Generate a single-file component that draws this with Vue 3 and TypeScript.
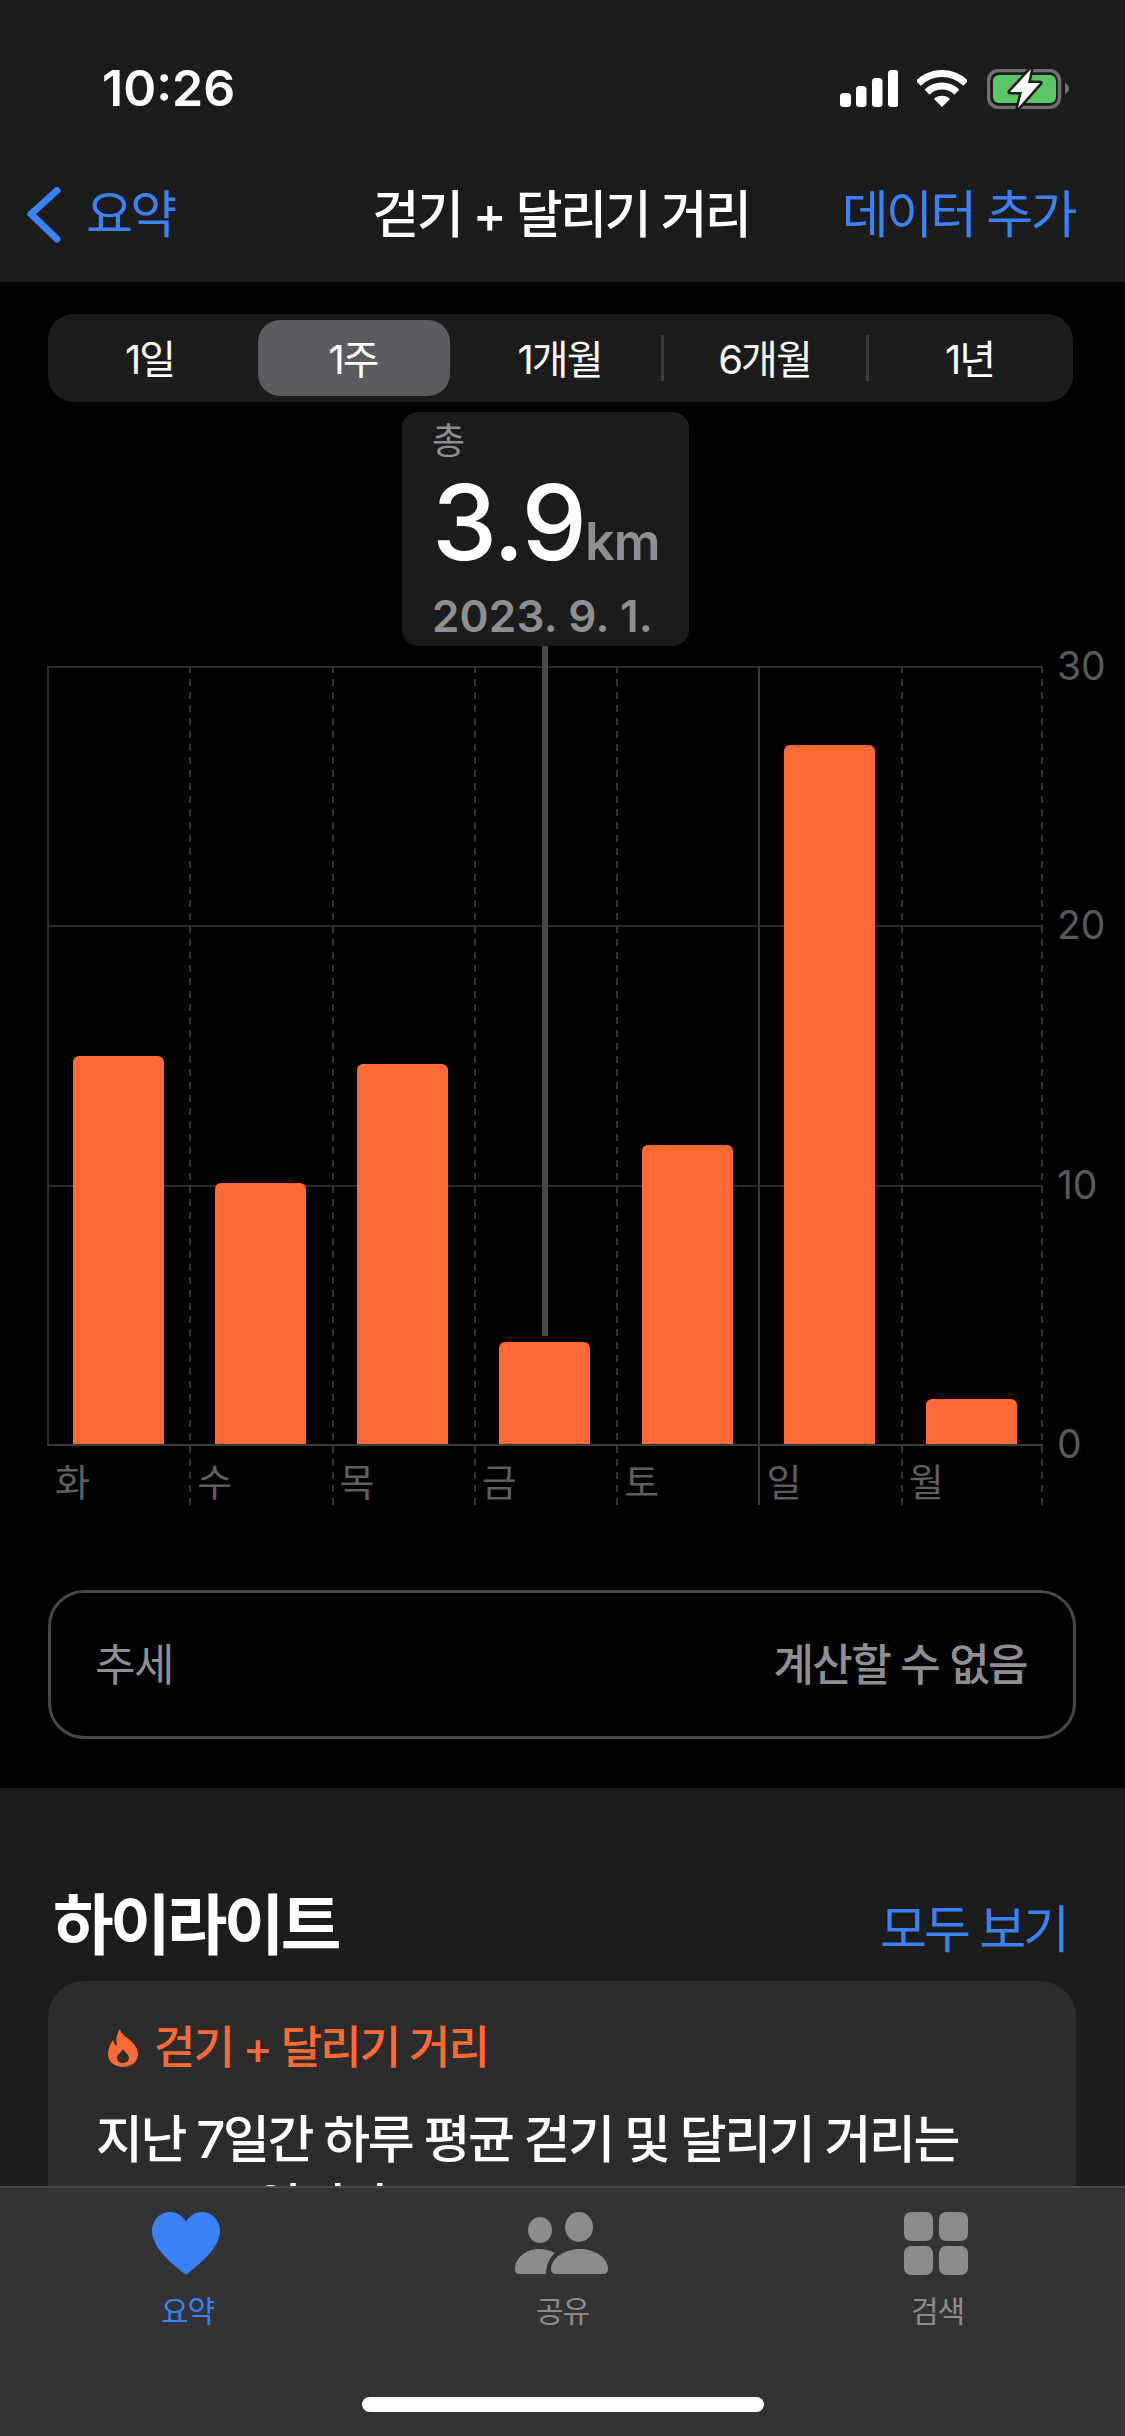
<script setup lang="ts">
interface Day { label: string; km: number; line: 'dash' | 'solid' | 'first' }

const ranges = ['1일', '1주', '1개월', '6개월', '1년']
const activeRange = 1

const PX_PER_KM = 25.93
const days: Day[] = [
  { label: '화', km: 14.95, line: 'first' },
  { label: '수', km: 10.05, line: 'dash' },
  { label: '목', km: 14.65, line: 'dash' },
  { label: '금', km: 3.95, line: 'dash' },
  { label: '토', km: 11.55, line: 'dash' },
  { label: '일', km: 26.95, line: 'solid' },
  { label: '월', km: 1.75, line: 'dash' },
]
const ticks = [30, 20, 10, 0]
</script>

<template>
  <div class="screen">
    <header class="top">
      <div class="status">
        <span class="status__time">10:26</span>
        <div class="status__icons">
          <svg width="58" height="37" viewBox="0 0 58 37" fill="#fff">
            <rect x="0" y="23" width="11" height="14" rx="3.5" />
            <rect x="16" y="16" width="10.5" height="21" rx="3.5" />
            <rect x="32" y="8" width="10.5" height="29" rx="3.5" />
            <rect x="48" y="0" width="10.5" height="37" rx="3.5" />
          </svg>
          <svg width="50" height="37" viewBox="0 0 50 37" fill="none">
            <path d="M1.3 13.3A33.5 33.5 0 0 1 48.7 13.3" stroke="#fff" stroke-width="7" />
            <path d="M10.2 22.2A21 21 0 0 1 39.8 22.2" stroke="#fff" stroke-width="7" />
            <path d="M25 37L17 29A11.3 11.3 0 0 1 33 29Z" fill="#fff" />
          </svg>
          <svg class="status__battery" width="82" height="40" viewBox="0 0 82 40" fill="none">
            <rect x="1.5" y="1.5" width="71" height="37" rx="10" stroke="#6f6f71" stroke-width="3.5" />
            <rect x="6" y="6" width="63" height="28" rx="6" fill="#5ac467" />
            <path d="M78 14C80.500 15 82 17 82 19.500C82 22 80.500 24 78 25Z" fill="#6f6f71" />
            <path
              d="M44 0L23 23H35L31 39L53 14H41Z"
              fill="#fff" stroke="#1c1c1d" stroke-width="5" stroke-linejoin="round" paint-order="stroke"
            />
          </svg>
        </div>
      </div>
      <nav class="nav">
        <div class="nav__back">
          <svg width="34" height="56" viewBox="0 0 34 56" fill="none">
            <path d="M30 3.500L4 27L30 52" stroke="#3b82f6" stroke-width="7" stroke-linecap="round" stroke-linejoin="round" />
          </svg>
          <span>요약</span>
        </div>
        <div class="nav__title">걷기 + 달리기 거리</div>
        <div class="nav__add">데이터 추가</div>
      </nav>
    </header>

    <main class="detail">
      <div class="segments">
        <div
          v-for="(r, i) in ranges" :key="r"
          :class="['segments__item', { 'segments__item--active': i === activeRange, 'segments__item--sep': i >= 3 }]"
        >
          {{ r }}
        </div>
      </div>

      <div class="chart">
        <div class="tip">
          <div class="tip__label">총</div>
          <div class="tip__value">3.9<span class="tip__unit">km</span></div>
          <div class="tip__date">2023. 9. 1.</div>
        </div>
        <div class="tip__line"></div>

        <div
          v-for="t in ticks" :key="t"
          class="tick"
          :style="{ top: `${(30 - t) * PX_PER_KM}px` }"
        >
          <span class="tick__label">{{ t }}</span>
        </div>

        <div class="columns">
          <div
            v-for="d in days" :key="d.label"
            :class="['col', `col--${d.line}`]"
          >
            <div class="col__plot">
              <div class="col__bar" :style="{ height: `${d.km * PX_PER_KM}px` }"></div>
            </div>
            <div class="col__label">{{ d.label }}</div>
          </div>
        </div>
      </div>

      <div class="trend">
        <span class="trend__label">추세</span>
        <span class="trend__value">계산할 수 없음</span>
      </div>
    </main>

    <section class="highlights">
      <div class="highlights__head">
        <h2 class="highlights__title">하이라이트</h2>
        <span class="highlights__all">모두 보기</span>
      </div>
      <div class="card">
        <div class="card__tag">
          <svg width="30" height="38" viewBox="0 0 30 38">
            <path
              fill="#ff6935" fill-rule="evenodd"
              d="M12 0C13 6 19 8 24 13C28 17 30 21 30 25C30 33 23 38 15 38C7 38 0 33 0 25C0 20 2 15 5 11C6 14 7 16 9 17C8 11 8 5 12 0ZM15 20C13 24 9 25 9 29C9 32 12 34 15 34C18 34 21 32 21 29C21 25 17 24 15 20Z"
            />
          </svg>
          <span>걷기 + 달리기 거리</span>
        </div>
        <p class="card__text">지난 7일간 하루 평균 걷기 및 달리기 거리는 12.0km입니다.</p>
      </div>
    </section>

    <!-- tab bar lies over the card -->
    <footer class="tabs">
      <div class="tabs__item tabs__item--active">
        <svg width="68" height="63" viewBox="0 0 68 63">
          <path fill="#3b82f6" d="M34 63C30 59 0 39 0 19C0 8 8 0 18 0C25 0 31 4 34 10C37 4 43 0 50 0C60 0 68 8 68 19C68 39 38 59 34 63Z" />
        </svg>
        <span>요약</span>
      </div>
      <div class="tabs__item">
        <svg width="93" height="63" viewBox="0 0 93 63" fill="#8c8c8c">
          <ellipse cx="25" cy="18" rx="12" ry="13" />
          <ellipse cx="64" cy="15" rx="14" ry="15" />
          <path d="M0 57C0 46 11 37 24 37C29 37 34 38 40 41C34 46 31 54 31 62H4C1 62 0 60 0 57Z" />
          <path d="M36 57C36 46 50 37 65 37C80 37 93 46 93 57C93 60 91 62 88 62H41C38 62 36 60 36 57Z" />
        </svg>
        <span>공유</span>
      </div>
      <div class="tabs__item">
        <svg width="64" height="63" viewBox="0 0 64 63" fill="#8c8c8c">
          <rect x="0" y="0" width="29" height="29" rx="7" />
          <rect x="35" y="0" width="29" height="29" rx="7" />
          <rect x="0" y="34" width="29" height="29" rx="7" />
          <rect x="35" y="34" width="29" height="29" rx="7" />
        </svg>
        <span>검색</span>
      </div>
      <div class="tabs__home"></div>
    </footer>
  </div>
</template>

<style>
html, body { margin: 0; background: #000; }
</style>

<style scoped>
.screen {
  position: relative; width: 1125px; height: 2436px; overflow: hidden;
  background: #000; color: #fff;
  font-family: Inter, "Noto Sans CJK KR", sans-serif;
}

/* Header */
.top { background: #1c1c1d; height: 282px; }
.status {
  height: 80px; padding: 70px 56px 0 102px;
  display: flex; justify-content: space-between; align-items: flex-start;
}
.status__time { font-size: 50px; font-weight: 600; line-height: 37px; }
.status__icons { display: flex; align-items: flex-start; gap: 19px; }
.status__battery { margin-top: -1px; margin-left: 1px; }

.nav {
  height: 129px; padding: 0 50px 0 47px;
  display: grid; grid-template-columns: 1fr auto 1fr; align-items: center;
  font-size: 51px; line-height: 60px; letter-spacing: -2.6px;
}
.nav__back { display: flex; align-items: center; gap: 25px; margin-left: -20px; color: #3b82f6; }
.nav__title { font-weight: 500; letter-spacing: -2.4px; }
.nav__add { color: #3b82f6; text-align: right; }

/* Detail */
.detail { height: 1506px; padding: 32px 48px 0; box-sizing: border-box; }

.segments {
  display: grid; grid-template-columns: repeat(5, 1fr);
  height: 88px; width: 1025px; padding: 6px 0; box-sizing: border-box;
  background: #1c1c1d; border-radius: 26px;
}
.segments__item {
  position: relative; display: flex; align-items: center; justify-content: center;
  padding: 0 2px 3px 0; box-sizing: border-box;
  font-size: 40px; letter-spacing: -2px; border-radius: 22px;
}
.segments__item--active { background: #5c5c60; margin: 0 8px 0 5px; }
.segments__item--sep::before {
  content: ""; position: absolute; left: -2px; top: 15px; bottom: 15px; width: 3px; background: #3a3a3c;
}

.chart { position: relative; margin: 264px 0 0 -1px; height: 839px; width: 996px; }

.tip {
  position: absolute; left: 355px; top: -254px; width: 287px; height: 234px;
  box-sizing: border-box; padding: 6px 30px 0;
  background: #1c1c1d; border-radius: 16px;
}
.tip__label { font-size: 36px; line-height: 46px; color: #8e8e93; }
.tip__value { font-size: 104px; line-height: 110px; letter-spacing: -2px; margin-top: 3px; font-weight: 500; }
.tip__unit { font-size: 52px; font-weight: 600; color: #8e8e93; letter-spacing: -1px; }
.tip__date { font-size: 44px; line-height: 50px; font-weight: 600; color: #8e8e93; margin-top: -6px; letter-spacing: 0.2px; }
.tip__line {
  position: absolute; left: 495px; top: -20px; width: 6px; height: 690px;
  background: #48484a; z-index: 2;
}

.tick { position: absolute; left: 0; right: 0; height: 2px; background: #2a2a2c; }
.tick:nth-of-type(6) { background: #3a3a3c; }
.tick__label {
  position: absolute; left: 1010px; top: -24px;
  font-size: 39px; line-height: 48px; color: #5a5a5c;
}

.columns { position: relative; display: flex; height: 100%; }
.columns::after {
  content: ""; position: absolute; right: 0; top: 0; bottom: 0; width: 2px;
  background: repeating-linear-gradient(#343436 0 7px, transparent 7px 13px);
}
.col { position: relative; flex: 1; }
.col::before { content: ""; position: absolute; left: 0; top: 0; bottom: 0; width: 2px; }
.col--dash::before { background: repeating-linear-gradient(#343436 0 7px, transparent 7px 13px); }
.col--solid::before { background: #3a3a3c; }
.col--first::before { background: #2e2e30; bottom: 61px; }

.col__plot { position: relative; height: 778px; display: flex; justify-content: center; align-items: flex-end; }
.col__bar { width: 91px; background: #ff6935; border-radius: 6px 6px 0 0; }
.col__label {
  padding: 15px 0 0 8px;
  font-size: 38px; line-height: 46px; letter-spacing: -1px; color: #5e5e60;
}

.trend {
  margin-top: 85px; height: 149px; width: 1028px; box-sizing: border-box;
  display: flex; justify-content: space-between; align-items: center;
  padding: 0 46px 5px 44px;
  border: 3px solid #48484a; border-radius: 36px;
  font-size: 44px; letter-spacing: -1.6px; color: #8e8e93;
}
.trend__value { font-weight: 500; }

/* Highlights */
.highlights { background: #1c1c1d; padding: 92px 48px 0; height: 700px; box-sizing: border-box; }
.highlights__head { display: flex; justify-content: space-between; align-items: center; padding: 0 10px 0 5px; }
.highlights__title { margin: 0; font-size: 66px; line-height: 80px; font-weight: 700; letter-spacing: -3.8px; }
.highlights__all { font-size: 51px; line-height: 80px; margin-top: 10px; color: #3b82f6; letter-spacing: -3px; }

.card { margin-top: 11px; width: 1028px; background: #2c2c2d; border-radius: 36px; padding: 40px 48px; box-sizing: border-box; }
.card__tag {
  display: flex; align-items: center; gap: 16px; margin-left: 12px; margin-top: -1px;
  font-size: 45px; line-height: 56px; letter-spacing: -2px; font-weight: 500; color: #ff6935;
}
.card__text { margin: 30px 0 0; font-size: 51px; line-height: 68px; font-weight: 500; letter-spacing: -2.4px; }

/* Tab bar */
.tabs {
  position: absolute; left: 0; right: 0; bottom: 0; height: 250px; box-sizing: border-box;
  display: flex; align-items: flex-start; padding-top: 24px;
  background: #333335; border-top: 2px solid #4a4a4c;
}
.tabs__item {
  flex: 1; display: flex; flex-direction: column; align-items: center;
  font-size: 30px; line-height: 36px; letter-spacing: -1px; color: #8c8c8c;
}
.tabs__item svg { margin-right: 3px; }
.tabs__item span { margin-top: 18px; }
.tabs__item--active { color: #3b82f6; }
.tabs__home {
  position: absolute; left: 362px; bottom: 24px; width: 402px; height: 15px;
  background: #fff; border-radius: 8px;
}
</style>
